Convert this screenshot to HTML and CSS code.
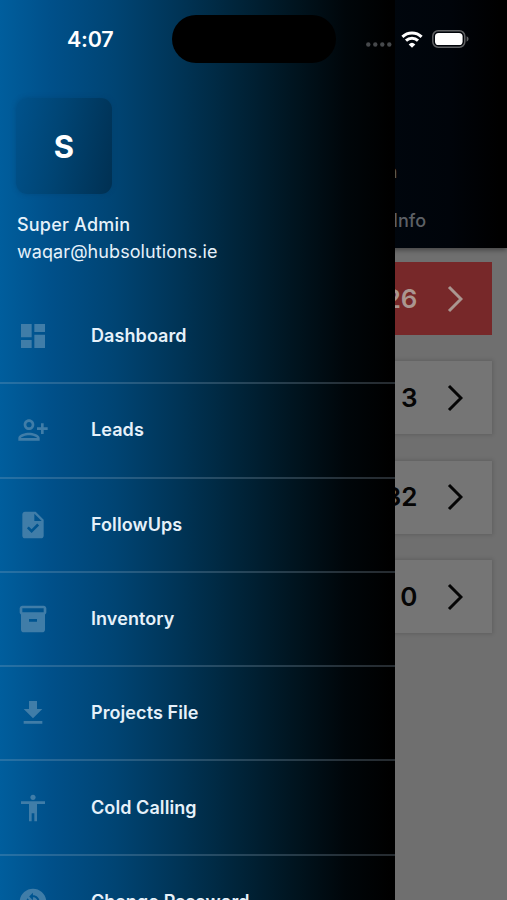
FILE: index.html
```html
<!DOCTYPE html>
<html lang="en">
<head>
<meta charset="utf-8">
<title>Menu</title>
<link rel="stylesheet" href="styles.css">
</head>
<body>
<div class="screen">
  <main class="page">
    <header class="page-header">
      <div class="page-title">Admin</div>
      <div class="page-tab">Leads Info</div>
    </header>
    <section class="cards">
      <div class="card card-red"><span class="count">26</span><svg class="chevron" viewBox="0 0 16 28"><path d="M2 2l12 12L2 26"/></svg></div>
      <div class="card"><span class="count">3</span><svg class="chevron" viewBox="0 0 16 28"><path d="M2 2l12 12L2 26"/></svg></div>
      <div class="card"><span class="count">32</span><svg class="chevron" viewBox="0 0 16 28"><path d="M2 2l12 12L2 26"/></svg></div>
      <div class="card"><span class="count">0</span><svg class="chevron" viewBox="0 0 16 28"><path d="M2 2l12 12L2 26"/></svg></div>
    </section>
  </main>

  <aside class="drawer">
    <div class="profile">
      <div class="avatar">S</div>
      <div class="name">Super Admin</div>
      <div class="email">waqar@hubsolutions.ie</div>
    </div>
    <nav class="menu">
      <a class="item"><svg class="icon" viewBox="0 0 24 24"><path d="M3 13h8V3H3v10zm0 8h8v-6H3v6zm10 0h8V11h-8v10zm0-18v6h8V3h-8z"/></svg><span class="label">Dashboard</span></a>
      <a class="item"><svg class="icon" viewBox="0 0 24 24"><path d="M13 8c0-2.21-1.79-4-4-4S5 5.79 5 8s1.79 4 4 4 4-1.79 4-4zm-2 0c0 1.1-.9 2-2 2s-2-.9-2-2 .9-2 2-2 2 .9 2 2zM1 18v2h16v-2c0-2.66-5.33-4-8-4s-8 1.34-8 4zm2 0c.2-.71 3.3-2 6-2 2.69 0 5.78 1.28 6 2H3zM20 15v-3h3v-2h-3V7h-2v3h-3v2h3v3h2z"/></svg><span class="label">Leads</span></a>
      <a class="item"><svg class="icon" viewBox="0 0 24 24"><path d="M14 2H6c-1.1 0-1.99.9-1.99 2L4 20c0 1.1.89 2 1.99 2H18c1.1 0 2-.9 2-2V8l-6-6zm-3.06 16L7.4 14.46l1.41-1.41 2.12 2.12 4.24-4.24 1.41 1.41L10.94 18zM13 9V3.5L18.5 9H13z"/></svg><span class="label">FollowUps</span></a>
      <a class="item"><svg class="icon" viewBox="0 0 24 24"><path d="M20 2H4c-1 0-2 .9-2 2v3.01c0 .72.43 1.34 1 1.69V20c0 1.1 1.1 2 2 2h14c.9 0 2-.9 2-2V8.7c.57-.35 1-.97 1-1.69V4c0-1-1-2-2-2zm-5 12H9v-2h6v2zm5-7H4V4h16v3z"/></svg><span class="label">Inventory</span></a>
      <a class="item"><svg class="icon" viewBox="0 0 24 24"><path d="M5 20h14v-2H5v2zM19 9h-4V3H9v6H5l7 7 7-7z"/></svg><span class="label">Projects File</span></a>
      <a class="item"><svg class="icon" viewBox="0 0 24 24"><path d="M12 2c1.1 0 2 .9 2 2s-.9 2-2 2-2-.9-2-2 .9-2 2-2zm9 7h-6v13h-2v-6h-2v6H9V9H3V7h18v2z"/></svg><span class="label">Cold Calling</span></a>
      <a class="item"><svg class="icon" viewBox="0 0 24 24"><path d="M12 2C6.48 2 2 6.48 2 12s4.48 10 10 10 10-4.48 10-10S17.52 2 12 2zm.06 17v-2.01H12c-1.28 0-2.56-.49-3.54-1.46-1.71-1.71-1.92-4.35-.64-6.29l1.1 1.1c-.71 1.33-.53 3.01.59 4.13.7.7 1.62 1.03 2.54 1.01v-2.14l2.83 2.83L12.06 19zm4.11-4.24l-1.1-1.1c.71-1.33.53-3.01-.59-4.13C13.79 8.84 12.9 8.5 12 8.5h-.06v2.15L9.11 7.83 11.94 5v2.02c1.3-.02 2.61.45 3.6 1.45 1.7 1.7 1.91 4.35.63 6.29z"/></svg><span class="label">Change Password</span></a>
    </nav>
  </aside>

  <div class="status">
    <span class="time">4:07</span>
    <span class="island"></span>
    <span class="signals">
      <svg class="dots" viewBox="0 0 26 5"><circle cx="2.3" cy="2.5" r="2.2"/><circle cx="9.3" cy="2.5" r="2.2"/><circle cx="16.3" cy="2.5" r="2.2"/><circle cx="23.3" cy="2.5" r="2.2"/></svg>
      <svg class="wifi" viewBox="0 0 22 17"><path class="arc" d="M1.4 5.8a13.8 13.8 0 0 1 19.2 0M5 9.7a8.7 8.7 0 0 1 12 0"/><path class="tip" d="M11 16.8l-3.3-3.4a4.8 4.8 0 0 1 6.6 0z"/></svg>
      <svg class="battery" viewBox="0 0 37 18"><rect class="shell" x=".8" y=".8" width="32" height="16.4" rx="5.4"/><rect class="charge" x="3" y="3" width="27.6" height="12" rx="3.6"/><path class="cap" d="M34.6 6.3q2 .8 2 2.7t-2 2.7z"/></svg>
    </span>
  </div>
</div>
</body>
</html>
```
FILE: styles.css
```css
* { box-sizing: border-box; }

body {
  margin: 0;
  font-family: Inter, "Liberation Sans", sans-serif;
}

.screen {
  position: relative;
  width: 507px;
  height: 900px;
  overflow: hidden;
  background: #6f6f6f;
}

.page-header {
  height: 248px;
  padding: 161px 81px 0 0;
  text-align: right;
  color: #5d6065;
  background: linear-gradient(90deg, #00060d 390px, #00040a 450px, #000 500px);
  box-shadow: 0 2px 5px rgba(0, 0, 0, .4);
}

.page-title {
  height: 46px;
  padding-right: 28.5px;
  font-size: 18px;
  line-height: 22px;
}

.page-tab {
  font-size: 18px;
  font-weight: 500;
  line-height: 28px;
}

.cards {
  display: flex;
  flex-direction: column;
  gap: 26.4px;
  padding: 14px 15.5px 0 16px;
}

.card {
  display: flex;
  align-items: center;
  justify-content: flex-end;
  gap: 29px;
  height: 73px;
  padding-right: 29px;
  color: #050505;
  background: #757575;
  box-shadow: 0 0 4px 1px rgba(0, 0, 0, .15);
}

.card-red {
  color: #aa9690;
  background: #772829;
  box-shadow: none;
}

.count {
  font-size: 26px;
  font-weight: 600;
  line-height: 32px;
}

.chevron {
  width: 16px;
  height: 28px;
  fill: none;
  stroke: currentColor;
  stroke-width: 3;
}

.drawer {
  position: absolute;
  inset: 0 auto 0 0;
  width: 395px;
  overflow: hidden;
  color: #e6f1fa;
  background: linear-gradient(90deg, #005e9d 0, #00508a 50px, #004473 115px, #003558 175px, #00253b 235px, #00141f 295px, #00060a 345px, #000 390px);
}

.profile {
  height: 290px;
  padding: 98px 17px 0;
}

.avatar {
  width: 96px;
  height: 96px;
  margin-left: -1px;
  border-radius: 11px;
  font-size: 31px;
  font-weight: 700;
  line-height: 98px;
  text-align: center;
  color: #fff;
  background: linear-gradient(100deg, #00528c 0, #004473 45%, #003052 100%);
  box-shadow: 0 0 5px rgba(0, 55, 95, .35);
}

.name {
  margin-top: 17px;
  font-size: 18px;
  font-weight: 500;
  letter-spacing: .2px;
  line-height: 27px;
}

.email {
  font-size: 18px;
  letter-spacing: .08px;
  line-height: 28px;
}

.item {
  display: flex;
  align-items: center;
  gap: 42px;
  height: 94.3px;
  padding-left: 17px;
  border-bottom: 2px solid rgba(150, 175, 195, .25);
}

.icon {
  width: 32px;
  height: 32px;
  fill: #407da8;
}

.label {
  font-size: 18px;
  font-weight: 600;
  letter-spacing: .08px;
  line-height: 24px;
}

.status {
  position: absolute;
  inset: 0 0 auto;
  display: flex;
  height: 78px;
  padding: 15px 38px 0 67px;
  color: #fff;
}

.time {
  width: 105px;
  font-size: 21.5px;
  font-weight: 600;
  letter-spacing: -.25px;
  line-height: 48px;
}

.island {
  width: 164px;
  height: 48px;
  border-radius: 24px;
  background: #000;
}

.signals {
  display: flex;
  align-items: center;
  height: 48px;
  margin-left: 30px;
}

.dots {
  width: 26px;
  height: 5px;
  margin-top: 11px;
  fill: #46494c;
}

.wifi {
  width: 22px;
  height: 17px;
  margin-left: 9px;
}

.arc {
  fill: none;
  stroke: #fff;
  stroke-width: 3;
}

.tip { fill: #fff; }

.battery {
  width: 37px;
  height: 18px;
  margin-left: 9px;
}

.shell {
  fill: none;
  stroke: #606264;
  stroke-width: 1.5;
}

.charge { fill: #fff; }
.cap { fill: #606264; }
```
